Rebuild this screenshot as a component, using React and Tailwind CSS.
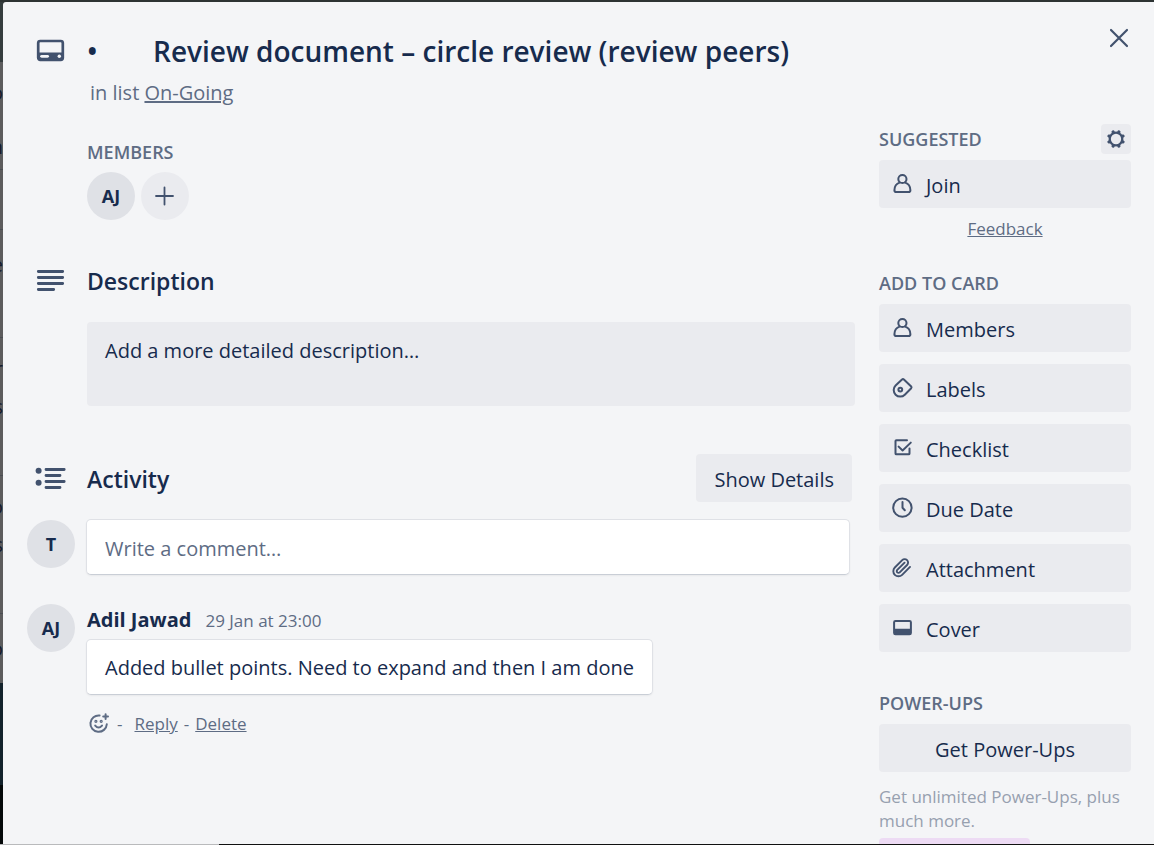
import React from 'react';

const sectionLabel = 'font-semibold text-[18px] leading-6 text-[#5e6c84] uppercase';
const actionButton =
  'flex h-12 w-full items-center gap-3 rounded-[4px] bg-[#eaebef] px-[11px] text-left text-xl text-[#172b4d] hover:bg-[#dfe1e6]';

function Icon({ className = 'size-6', children, width = 2 }) {
  return (
    <svg
      viewBox="0 0 24 24"
      className={className + ' shrink-0'}
      fill="none"
      stroke="#42526e"
      strokeWidth={width}
      strokeLinecap="round"
      strokeLinejoin="round"
      aria-hidden="true"
    >
      {children}
    </svg>
  );
}

const MemberIcon = () => (
  <Icon>
    <circle cx="12.4" cy="7" r="4.1" />
    <path d="M9.6 10.6C6.4 11.6 4.5 14.4 4.4 18.2Q4.4 20 6.2 20H18.6Q20.4 20 20.4 18.2C20.3 14.4 18.4 11.6 15.2 10.6" />
  </Icon>
);
const LabelIcon = () => (
  <Icon>
    <path d="M12 3.5L5.6 9.5A6.5 6.5 0 0 0 14.8 18.7L21.2 12.2Q21.9 11.3 21.2 10.5L13.9 3.5Q13 2.7 12 3.5Z" />
    <circle cx="10.3" cy="13.6" r="1.9" />
  </Icon>
);
const ChecklistIcon = () => (
  <Icon>
    <path d="M17 4.2H6.4Q5.5 4.2 5.5 5V17.4Q5.5 18.3 6.4 18.3H18.6Q19.5 18.3 19.5 17.4V12.5" />
    <path d="M8.6 10.6L12.6 14.5L20.8 6.6" />
  </Icon>
);
const ClockIcon = () => (
  <Icon>
    <circle cx="12.4" cy="11.6" r="9.2" />
    <path d="M12.5 6V11.8L14.8 14.3" />
  </Icon>
);
const AttachmentIcon = () => (
  <Icon width={2.2}>
    <g transform="translate(1.6 1.4) scale(0.86)">
      <path d="m21.44 11.05-9.19 9.19a6 6 0 0 1-8.49-8.49l8.57-8.57A4 4 0 1 1 18 8.84l-8.59 8.57a2 2 0 0 1-2.83-2.83l8.49-8.48" />
    </g>
  </Icon>
);
const CoverIcon = () => (
  <Icon>
    <rect x="4.1" y="4.9" width="16.8" height="13.4" rx="1.4" />
    <path d="M4 12.7H21V17.2Q21 18.4 19.8 18.4H5.2Q4 18.4 4 17.2Z" fill="#42526e" stroke="none" />
  </Icon>
);
const GearIcon = () => (
  <Icon width={2.3}>
    <circle cx="12" cy="12" r="6.3" />
    {[22.5, 67.5, 112.5, 157.5, 202.5, 247.5, 292.5, 337.5].map((angle) => (
      <path key={angle} d="M12 4.9V4.4" strokeWidth="3.2" transform={`rotate(${angle} 12 12)`} />
    ))}
  </Icon>
);

const cardActions = [
  { name: 'Members', icon: MemberIcon },
  { name: 'Labels', icon: LabelIcon },
  { name: 'Checklist', icon: ChecklistIcon },
  { name: 'Due Date', icon: ClockIcon },
  { name: 'Attachment', icon: AttachmentIcon },
  { name: 'Cover', icon: CoverIcon },
];

function Avatar({ initials }) {
  return (
    <span className="flex size-12 shrink-0 items-center justify-center rounded-full bg-[#dfe1e6] text-[18px] font-bold text-[#172b4d]">
      {initials}
    </span>
  );
}

function Sidebar() {
  return (
    <aside className="w-[252px] shrink-0 pt-2">
      <div className="flex items-center justify-between">
        <h3 className={sectionLabel}>Suggested</h3>
        <button type="button" aria-label="Settings" className="flex size-[30px] items-center justify-center rounded-[4px] bg-[#eaebef]">
          <GearIcon />
        </button>
      </div>
      <button type="button" className={actionButton + ' mt-[6px]'}>
        <MemberIcon />
        <span className="pt-1">Join</span>
      </button>
      <p className="mt-[9px] text-center text-[17px] leading-6 text-[#5e6c84]">
        <a href="#feedback" className="underline">Feedback</a>
      </p>

      <h3 className={sectionLabel + ' mt-[30px]'}>Add to card</h3>
      <div className="mt-[9px] flex flex-col gap-3">
        {cardActions.map(({ name, icon: ActionIcon }) => (
          <button key={name} type="button" className={actionButton}>
            <ActionIcon />
            <span className="pt-1">{name}</span>
          </button>
        ))}
      </div>

      <h3 className={sectionLabel + ' mt-[39px]'}>Power-Ups</h3>
      <button type="button" className={actionButton + ' mt-[9px] justify-center'}>
        <span className="pt-1">Get Power-Ups</span>
      </button>
      <p className="mt-[13px] text-[17px] leading-6 text-[#97a0af]">Get unlimited Power-Ups, plus much more.</p>
      <div className="mt-[5px] h-12 w-[151px] rounded-[4px] bg-[#eddbf4]" />
    </aside>
  );
}

function Details() {
  return (
    <div className="min-w-0 flex-1 pt-6">
      <section className="pl-[60px]">
        <h3 className={sectionLabel}>Members</h3>
        <div className="mt-2 flex gap-[6px]">
          <Avatar initials="AJ" />
          <button type="button" aria-label="Add member" className="flex size-12 items-center justify-center rounded-full bg-[#eaebef]">
            <Icon width={1.8}>
              <path d="M11.5 3.5V20.5M3 12H20" />
            </Icon>
          </button>
        </div>
      </section>

      <section className="mt-[41px]">
        <div className="flex h-10 items-center">
          <div className="w-[60px] shrink-0 pl-[9px]">
            <svg viewBox="0 0 30 24" className="h-6 w-[30px]" stroke="#42526e" strokeWidth="2.8" strokeLinecap="round" aria-hidden="true">
              <path d="M2.3 2.5H26.7M2.3 8.5H26.7M2.3 14.5H26.7M2.3 20.5H17.7" />
            </svg>
          </div>
          <h2 className="text-[23px] font-semibold text-[#172b4d]">Description</h2>
        </div>
        <div className="mt-[21px] pl-[60px]">
          <button type="button" className="flex h-[84px] w-full rounded-[4px] bg-[#eaebef] px-[18px] pt-[15px] text-left text-xl text-[#172b4d]">
            Add a more detailed description…
          </button>
        </div>
      </section>

      <section className="mt-12">
        <div className="flex h-12 items-center pr-[3px]">
          <div className="w-[60px] shrink-0 pl-2">
            <svg viewBox="0 0 32 24" className="h-6 w-8" stroke="#42526e" strokeWidth="2.8" strokeLinecap="round" aria-hidden="true">
              <path d="M11 3.5H29.2M11 9.5H25M11 15.5H29.2M11 21.5H25" />
              <circle cx="3.6" cy="4.8" r="3" fill="#42526e" stroke="none" />
              <circle cx="3.6" cy="16.8" r="3" fill="#42526e" stroke="none" />
            </svg>
          </div>
          <h2 className="flex-1 pt-[2px] text-[23px] font-semibold text-[#172b4d]">Activity</h2>
          <button type="button" className="h-12 rounded-[4px] bg-[#eaebef] px-[18px] pt-1 text-xl text-[#172b4d]">
            Show Details
          </button>
        </div>

        <div className="mt-[17px] flex gap-[11px] pr-[5px]">
          <div className="pt-px">
            <Avatar initials="T" />
          </div>
          <input
            type="text"
            aria-label="Write a comment"
            placeholder="Write a comment…"
            className="h-[56px] min-w-0 flex-1 rounded-[5px] border border-[#dfe1e6] border-b-[#c9ced6] bg-white px-[18px] pt-[2px] text-xl text-[#172b4d] shadow-xs placeholder:text-[#5e6c84]"
          />
        </div>

        <article className="mt-[29px] flex gap-[11px]">
          <Avatar initials="AJ" />
          <div className="min-w-0 flex-1">
            <p className="flex items-baseline gap-[14px] pl-px">
              <strong className="text-xl leading-8 font-bold text-[#172b4d]">Adil Jawad</strong>
              <time className="text-[17px] text-[#5e6c84]">29 Jan at 23:00</time>
            </p>
            <p className="mt-[3px] flex min-h-[56px] w-fit items-center rounded-[5px] border border-[#dfe1e6] border-b-[#c9ced6] bg-white px-[18px] pt-[2px] text-xl text-[#172b4d] shadow-xs">
              Added bullet points. Need to expand and then I am done
            </p>
            <div className="mt-[17px] flex items-center pl-px text-[17px] leading-6 text-[#5e6c84]">
              <button type="button" aria-label="Add reaction">
                <svg viewBox="0 0 24 24" className="size-6" fill="none" stroke="#5e6c84" strokeWidth="2" strokeLinecap="round" aria-hidden="true">
                  <path d="M12.6 3.5A8.2 8.2 0 1 0 19.8 12.2" />
                  <path d="M8.2 13.6Q11.6 17.4 15 13.6M18.6 2.2V7M16.2 4.6H21" />
                  <circle cx="8.9" cy="9.3" r="0.6" />
                  <circle cx="14.2" cy="9.3" r="0.6" />
                </svg>
              </button>
              <span className="ml-[6px]">-</span>
              <a href="#reply" className="ml-3 underline">Reply</a>
              <span className="mx-[6px]">-</span>
              <a href="#delete" className="underline">Delete</a>
            </div>
          </div>
        </article>
      </section>
    </div>
  );
}

const stripRow = 'flex shrink-0 items-center justify-end';

function BoardEdge() {
  return (
    <div className="flex w-[3px] shrink-0 flex-col overflow-hidden text-xl text-[#141a2b]" aria-hidden="true">
      <div className="h-[60px] shrink-0 bg-[#353d3e]" />
      <div className="flex min-h-0 flex-1 flex-col bg-[#5c5c5d]">
        <div className={stripRow + ' h-[62px]'}>o</div>
        <div className={stripRow + ' h-[46px] border-b border-[#4a4d52]'}>n</div>
        <div className={stripRow + ' h-[60px] border-b border-[#4a4d52]'} />
        <div className={stripRow + ' h-[70px]'}>e</div>
        <div className={stripRow + ' h-[38px] border-b border-[#4a4d52]'} />
        <div className={stripRow + ' h-[62px]'}>r</div>
        <div className={stripRow + ' h-[14px]'}>s</div>
        <div className={stripRow + ' h-[62px] border-b border-[#4a4d52]'} />
        <div className={stripRow + ' h-[62px]'}>o</div>
        <div className={stripRow + ' h-[14px]'}>s</div>
        <div className={stripRow + ' h-[62px] border-b border-[#4a4d52]'} />
        <div className={stripRow + ' h-[69px]'}>o</div>
      </div>
      <div className="h-[102px] shrink-0 bg-[#13222b]" />
      <div className="h-[59px] shrink-0 bg-[#040809]" />
    </div>
  );
}

export default function App() {
  return (
    <div className="flex h-screen flex-col overflow-hidden bg-[#2d3333] pt-[2px] font-['Open_Sans','Noto_Sans',sans-serif]">
      <div className="flex min-h-0 flex-1">
        <BoardEdge />
        <main className="min-w-0 flex-1 overflow-hidden rounded-tl-[3px] bg-[#f4f5f7] pr-[23px] pl-6">
          <header className="flex pt-[30px]">
            <div className="w-[60px] shrink-0 pt-[6px] pl-[9px]">
              <svg viewBox="0 0 30 24" className="h-6 w-[30px]" aria-hidden="true">
                <rect x="2.2" y="3" width="24.6" height="18.8" rx="2" fill="none" stroke="#42526e" strokeWidth="2.7" />
                <path d="M2 14.6H27V20Q27 22 25 22H4Q2 22 2 20Z" fill="#42526e" />
                <path d="M5.6 18.3H11.6" stroke="#f4f5f7" strokeWidth="2.8" strokeLinecap="round" />
                <circle cx="23.3" cy="18.3" r="1.7" fill="#f4f5f7" />
              </svg>
            </div>
            <div className="min-w-0 flex-1">
              <h1 className="flex text-[28px] leading-[38px] font-semibold text-[#172b4d]">
                <span className="w-[66px] shrink-0">•</span>
                Review document – circle review (review peers)
              </h1>
              <p className="pl-[3px] text-xl leading-[46px] text-[#5e6c84]">
                in list <a href="#list" className="underline">On-Going</a>
              </p>
            </div>
            <button type="button" aria-label="Close" className="-mt-[6px] flex size-6 items-center justify-center">
              <Icon width={2.2}>
                <path d="M4 4L20 20M20 4L4 20" />
              </Icon>
            </button>
          </header>
          <div className="flex gap-6">
            <Details />
            <Sidebar />
          </div>
        </main>
      </div>
      <footer className="flex h-px shrink-0 bg-[#111111]">
        <div className="w-[219px] bg-[#b9babc]" />
      </footer>
    </div>
  );
}
